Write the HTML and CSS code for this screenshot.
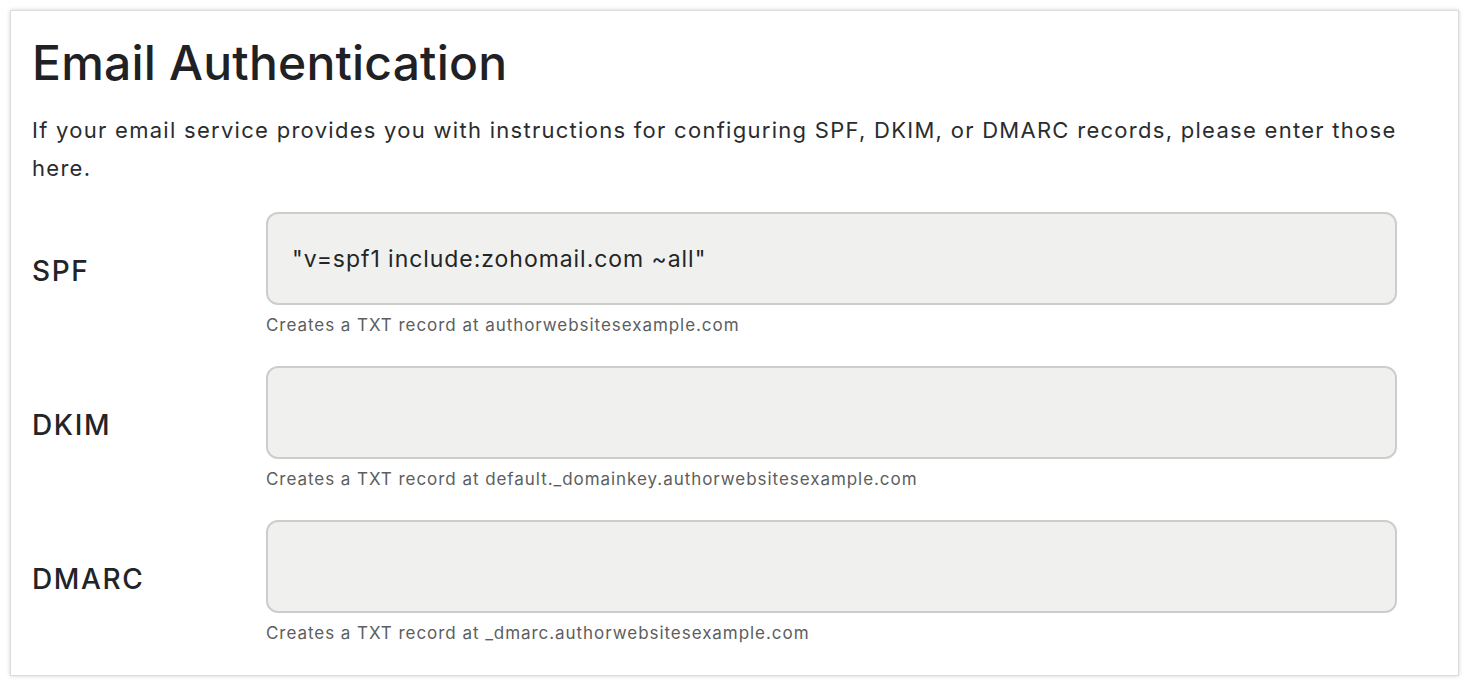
FILE: index.html
```html
<!DOCTYPE html>
<html lang="en">
<head>
<meta charset="utf-8">
<title>Email Authentication</title>
<link rel="stylesheet" href="styles.css">
</head>
<body>
<section class="card">
  <h1 class="title">Email Authentication</h1>
  <p class="intro">If your email service provides you with instructions for configuring SPF, DKIM, or DMARC records, please enter those here.</p>
  <div class="rows">
    <div class="row">
      <label class="label" for="spf">SPF</label>
      <div class="field">
        <input class="input" id="spf" type="text" value="&quot;v=spf1 include:zohomail.com ~all&quot;">
        <div class="help">Creates a TXT record at authorwebsitesexample.com</div>
      </div>
    </div>
    <div class="row">
      <label class="label" for="dkim">DKIM</label>
      <div class="field">
        <input class="input" id="dkim" type="text" value="">
        <div class="help">Creates a TXT record at default._domainkey.authorwebsitesexample.com</div>
      </div>
    </div>
    <div class="row">
      <label class="label" for="dmarc">DMARC</label>
      <div class="field">
        <input class="input" id="dmarc" type="text" value="">
        <div class="help">Creates a TXT record at _dmarc.authorwebsitesexample.com</div>
      </div>
    </div>
  </div>
</section>
</body>
</html>
```

FILE: styles.css
```css
* { box-sizing: border-box; }
html, body { background: #ffffff; }
body {
  margin: 0;
  padding: 10px 9px 10px 10px;
  font-family: Inter, "Noto Sans", sans-serif;
  color: #1f2125;
}
.card {
  height: 666px;
  border: 1px solid #dcdcdc;
  box-shadow: 0 0 4px rgba(0, 0, 0, 0.18);
  background: #fff;
  padding: 26px 61px 0 21px;
}
.title {
  margin: 0;
  font-size: 48px;
  font-weight: 500;
  line-height: 52px;
  letter-spacing: 0.2px;
}
.intro {
  margin: 22px 0 0;
  font-size: 22px;
  line-height: 38px;
  letter-spacing: 1.28px;
  color: #2a2c30;
}
.rows {
  margin-top: 25px;
  display: flex;
  flex-direction: column;
  gap: 30px;
}
.row {
  display: grid;
  grid-template-columns: 234px 1fr;
  align-items: start;
}
.label {
  margin-top: 43px;
  font-size: 28px;
  line-height: 32px;
  font-weight: 500;
  letter-spacing: 1.6px;
  color: #222428;
}
.field {
  display: flex;
  flex-direction: column;
}
.input {
  height: 93px;
  width: 100%;
  border: 2px solid #cdcecb;
  border-radius: 12px;
  background: #f0f1ee;
  padding: 0 24px;
  font-family: inherit;
  font-size: 23px;
  letter-spacing: 0.95px;
  color: #232529;
  outline: none;
}
.help {
  margin-top: 9px;
  font-size: 17px;
  line-height: 22px;
  letter-spacing: 0.95px;
  color: #5c5e60;
}
```
